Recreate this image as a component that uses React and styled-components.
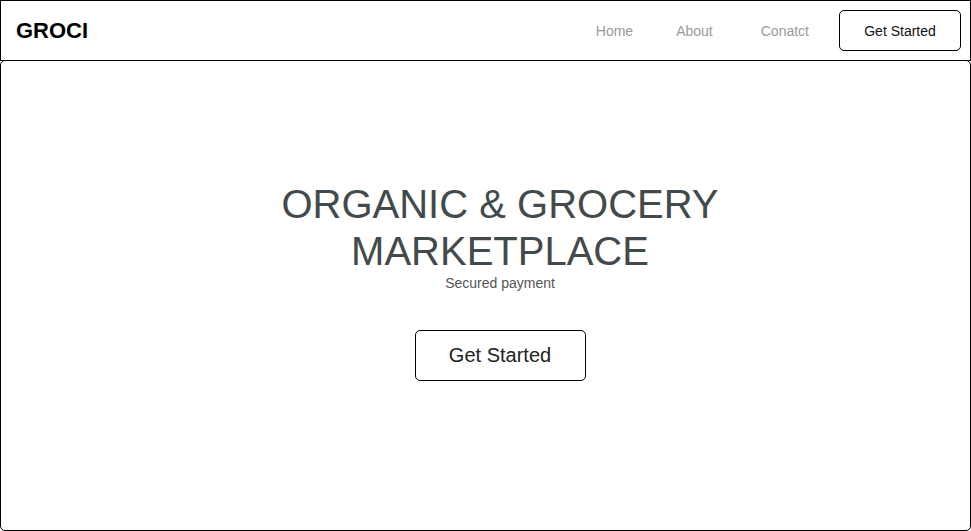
import styled, { createGlobalStyle } from 'styled-components';

const GlobalStyle = createGlobalStyle`
  * { box-sizing: border-box; }
  body {
    margin: 0;
    background: #fff;
    font-family: "Liberation Sans", Arial, sans-serif;
  }
`;

const Page = styled.div`
  width: 971px;
  height: 531px;
  display: flex;
  flex-direction: column;
`;

const Nav = styled.nav`
  height: 61px;
  border: 1px solid #000;
  display: flex;
  align-items: center;
  justify-content: space-between;
  padding: 0 9px 0 15px;
`;

const Logo = styled.div`
  font-size: 22px;
  font-weight: 700;
  color: #000;
`;

const Links = styled.div`
  display: flex;
  align-items: center;
`;

const NavLink = styled.a`
  font-size: 14px;
  color: #9a9a9a;
  text-decoration: none;
  margin-right: ${p => p.$gap}px;
`;

const Button = styled.button`
  font-family: "Liberation Sans", Arial, sans-serif;
  background: #fff;
  border: 1px solid #000;
  border-radius: 5px;
  color: ${p => (p.$big ? '#222' : '#111')};
  font-size: ${p => (p.$big ? 20 : 14)}px;
  width: ${p => (p.$big ? 171 : 122)}px;
  height: ${p => (p.$big ? 51 : 41)}px;
  margin-top: ${p => (p.$big ? 39 : 0)}px;
  cursor: pointer;
`;

const Hero = styled.main`
  flex: 1;
  margin-top: -1px;
  border: 1px solid #000;
  border-radius: 5px;
  display: flex;
  flex-direction: column;
  align-items: center;
  justify-content: center;
  padding: 0 0 30px 29px;
`;

const Title = styled.h1`
  margin: 0;
  font-size: 40px;
  font-weight: 400;
  line-height: 47px;
  color: #434a4c;
  text-align: center;
`;

const Sub = styled.p`
  margin: 0;
  font-size: 14px;
  line-height: 16px;
  color: #555;
`;

export default function App() {
  return (
    <Page>
      <GlobalStyle />
      <Nav>
        <Logo>GROCI</Logo>
        <Links>
          <NavLink href="#" $gap={43}>Home</NavLink>
          <NavLink href="#" $gap={48}>About</NavLink>
          <NavLink href="#" $gap={30}>Conatct</NavLink>
          <Button>Get Started</Button>
        </Links>
      </Nav>
      <Hero>
        <Title>ORGANIC &amp; GROCERY<br />MARKETPLACE</Title>
        <Sub>Secured payment</Sub>
        <Button $big>Get Started</Button>
      </Hero>
    </Page>
  );
}
